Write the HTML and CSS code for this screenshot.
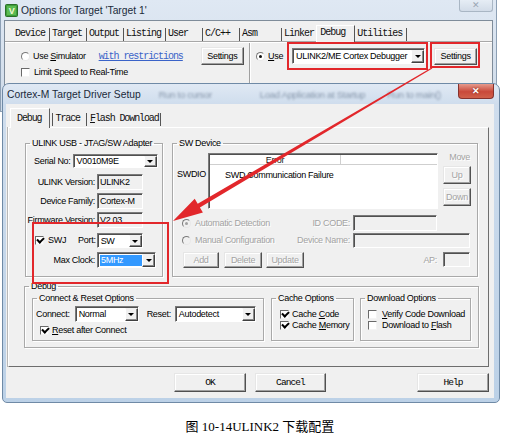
FILE: index.html
```html
<!DOCTYPE html>
<html>
<head>
<meta charset="utf-8">
<link rel="stylesheet" href="styles.css">
</head>
<body>
<div class="stage">

  <div class="win1">
    <div class="tbar1">
      <svg class="appicon" width="13" height="13" viewBox="0 0 13 13">
        <rect x="0.5" y="0.5" width="12" height="12" rx="1" fill="#3f9d3a" stroke="#2a6f28"/>
        <rect x="2" y="2" width="9" height="9" fill="#5bbb52"/>
        <text x="6.5" y="10" text-anchor="middle" font-family="Liberation Sans" font-weight="bold" font-size="9" fill="#f4f8d8">V</text>
      </svg>
      <span class="ttl">Options for Target 'Target 1'</span>
      <span class="xbtn1">✕</span>
    </div>
    <div class="client1">
      <div class="tabs1">
        <span class="tab1">Device</span><span class="tab1">Target</span><span class="tab1">Output</span><span class="tab1">Listing</span><span class="tab1">User  </span><span class="tab1">C/C++ </span><span class="tab1">Asm    </span><span class="tab1 tab1-nb">Linker</span><span class="tab1 tab1-sel">Debug </span><span class="tab1">Utilities</span>
      </div>
      <div class="panel1">
        <div class="sect-left">
          <div class="orow orow1">
            <span class="rb"></span><span class="olbl">Use <u>S</u>imulator</span>
            <span class="link">with restrictions</span>
            <span class="btn set1">Settings</span>
          </div>
          <div class="orow orow2">
            <span class="cb"></span><span class="olbl2">Limit Speed to Real-Time</span>
          </div>
        </div>
        <div class="vsep"></div>
        <div class="sect-right">
          <div class="orow orow1">
            <span class="rb on"></span><span class="olbl"><u>U</u>se</span>
            <span class="combo c-ulink"><span class="val">ULINK2/ME Cortex Debugger</span><span class="arr"></span></span>
            <span class="btn set2">Settings</span>
          </div>
        </div>
      </div>
    </div>
  </div>

  <div class="win2">
    <div class="tbar2">
      <span class="ttl">Cortex-M Target Driver Setup</span>
      <span class="ghost g1">Run to cursor</span>
      <span class="ghost g2">Load Application at Startup</span>
      <span class="ghost g3">Run to main()</span>
      <span class="xbtn2">✕</span>
    </div>
    <div class="client2">
      <div class="tabs2">
        <span class="tab2 tab2-sel">Debug</span><span class="tab2">Trace</span><span class="tab2 tab2-last"><u>F</u>lash Download</span>
      </div>
      <div class="panel2">
        <div class="toprow">
          <fieldset class="grp g-ulink">
            <legend>ULINK USB - JTAG/SW Adapter</legend>
            <div class="urow u-serial">
              <span>Serial No:</span>
              <span class="combo c-serial"><span class="val">V0010M9E</span><span class="arr"></span></span>
            </div>
            <div class="urow u-info u-first"><span class="ulbl">ULINK Version:</span><span class="tb tb-info">ULINK2</span></div>
            <div class="urow u-info"><span class="ulbl">Device Family:</span><span class="tb tb-info">Cortex-M</span></div>
            <div class="urow u-info"><span class="ulbl">Firmware Version:</span><span class="tb tb-info">V2.03</span></div>
            <div class="urow u-swj">
              <span class="cb on"></span><span class="swj">SWJ</span><span class="port">Port:</span>
              <span class="combo c-port"><span class="val">SW</span><span class="arr"></span></span>
            </div>
            <div class="urow u-clk">
              <span class="ulbl">Max Clock:</span>
              <span class="combo c-clk"><span class="val"><span class="sel">5MHz</span></span><span class="arr"></span></span>
            </div>
          </fieldset>
          <fieldset class="grp g-sw">
            <legend>SW Device</legend>
            <div class="sw-top">
              <span class="swdio">SWDIO</span>
              <div class="list">
                <div class="lhead"><span class="lcol">Error</span><span class="lcol2"></span></div>
                <div class="lbody">SWD Communication Failure</div>
              </div>
              <div class="move">
                <span class="dis movelbl">Move</span>
                <span class="btn dis b-mv">Up</span>
                <span class="btn dis b-mv b-down">Down</span>
              </div>
            </div>
            <div class="swrow sw-b">
              <span class="swleft"><span class="rb dim on"></span><span class="dis">Automatic Detection</span></span>
              <span class="swlbl dis">ID CODE:</span><span class="tb b-id"></span>
            </div>
            <div class="swrow sw-c">
              <span class="swleft"><span class="rb dim"></span><span class="dis">Manual Configuration</span></span>
              <span class="swlbl dis">Device Name:</span><span class="tb b-name"></span>
            </div>
            <div class="swrow sw-d">
              <span class="btn dis b-add">Add</span>
              <span class="btn dis b-del">Delete</span>
              <span class="btn dis b-upd">Update</span>
              <span class="swlbl dis">AP:</span><span class="tb b-ap"></span>
            </div>
          </fieldset>
        </div>
        <fieldset class="grp g-debug">
          <legend>Debug</legend>
          <div class="subrow">
            <fieldset class="grp g-conn">
              <legend>Connect &amp; Reset Options</legend>
              <div class="crow">
                <span>Connect:</span>
                <span class="combo c-normal"><span class="val">Normal</span><span class="arr"></span></span>
                <span class="rlbl">Reset:</span>
                <span class="combo c-auto"><span class="val">Autodetect</span><span class="arr"></span></span>
              </div>
              <div class="crow2"><span class="cb on"></span><span class="ctext"><u>R</u>eset after Connect</span></div>
            </fieldset>
            <fieldset class="grp g-cache">
              <legend>Cache Options</legend>
              <div class="chk chk1"><span class="cb on"></span><span class="ctext">Cache <u>C</u>ode</span></div>
              <div class="chk"><span class="cb on"></span><span class="ctext">Cache <u>M</u>emory</span></div>
            </fieldset>
            <fieldset class="grp g-dl">
              <legend>Download Options</legend>
              <div class="chk chk1"><span class="cb"></span><span class="ctext2"><u>V</u>erify Code Download</span></div>
              <div class="chk"><span class="cb"></span><span class="ctext2">Download to <u>F</u>lash</span></div>
            </fieldset>
          </div>
        </fieldset>
      </div>
      <div class="btnrow">
        <span class="btn mono b-ok">OK</span>
        <span class="btn mono b-cancel">Cancel</span>
        <span class="btn mono b-help">Help</span>
      </div>
    </div>
  </div>

  <div class="mark mk1"></div>
  <div class="mark mk2"></div>
  <div class="mark mk3"></div>

  <svg class="arrow" width="509" height="437" viewBox="0 0 509 437">
    <polygon fill="#e2272b" points="432.3,68.5 199.9,207.6 202.9,212.6 173,221 194.7,198.8 197.7,203.8 431.7,67.5"/>
  </svg>

  <p class="caption">图 10-14ULINK2 下载配置</p>
</div>
</body>
</html>
```

FILE: styles.css
```css
* { box-sizing: border-box; margin: 0; padding: 0; }

body {
  width: 509px;
  height: 437px;
  overflow: hidden;
  background: #fff;
  color: #000;
  font-family: "Liberation Sans", Arial, sans-serif;
  font-size: 9px;
  letter-spacing: -0.3px;
  line-height: 11px;
}

.stage { position: relative; width: 509px; height: 437px; overflow: hidden; }

u { text-decoration: underline; text-underline-offset: 1px; }

/* ---------- outer window ---------- */
.win1 {
  position: absolute;
  left: 0; top: 0;
  width: 497px; height: 112px;
  background: linear-gradient(#dfe8f3, #cfdbe9);
  border: 1px solid #8c9fb4;
  border-top: none;
  padding: 0 3px;
  display: flex;
  flex-direction: column;
}
.tbar1 { height: 20px; display: flex; align-items: center; padding-left: 1px; }
.appicon { flex: none; margin-right: 3px; }
.ttl { font-size: 10.3px; letter-spacing: 0; color: #1b2a3a; }
.xbtn1 {
  align-self: flex-start;
  margin-left: auto; margin-right: 0;
  width: 34px; height: 12px;
  border: 1px solid #a9b6c4; border-top: none;
  border-radius: 0 0 3px 3px;
  background: linear-gradient(#e6edf5, #d2dce8);
  color: #9aa6b3; font-size: 9px; line-height: 11px; text-align: center;
}
.client1 { flex: 1; background: #f0f0f0; border: 1px solid #7f8c9a; border-bottom: none; display: flex; flex-direction: column; }
.tabs1 { height: 20px; display: flex; align-items: flex-end; padding-left: 8px; }
.tab1 {
  height: 13px; line-height: 12px;
  padding: 0 4px 0 2px;
  border-right: 1px solid #555;
  font-family: "Liberation Mono", monospace; font-size: 10px; letter-spacing: -1px;
  white-space: pre; color: #111;
}
.tab1-nb { border-right: none; padding-right: 2px; }
.tab1-sel {
  height: 17px; line-height: 14px;
  padding: 0 4px 0 3px;
  border-left: 1px solid #fff; border-top: 1px solid #fff;
  position: relative; top: 1px;
  background: #f0f0f0;
}
.panel1 { flex: 1; display: flex; border-top: 1px solid #a8a8a8; box-shadow: inset 0 1px 0 #fff; }
.sect-left { width: 244px; padding: 5px 0 0 16px; }
.vsep { width: 2px; margin-top: 1px; border-left: 1px solid #a0a0a0; border-right: 1px solid #fff; }
.sect-right { flex: 1; padding: 5px 0 0 5px; }
.orow { display: flex; align-items: center; }
.orow1 { height: 18px; }
.orow2 { height: 11px; margin-top: 2px; }
.olbl { margin-left: 3px; }
.olbl2 { margin-left: 4px; }
.link {
  margin-left: 13px;
  font-family: "Liberation Mono", monospace; font-size: 10px; letter-spacing: -1.05px;
  color: #3a63c8; text-decoration: underline;
}
.set1 { margin-left: 18px; width: 43px; height: 18px; }
.c-ulink { margin-left: 9px; width: 133px; height: 16px; }
.set2 { margin-left: 9px; width: 43px; height: 17px; }

/* ---------- widgets ---------- */
.btn {
  display: flex; align-items: center; justify-content: center;
  background: #f0f0f0;
  border: 1px solid; border-color: #e6e6e6 #505050 #505050 #e6e6e6;
  box-shadow: inset -1px -1px 0 #a0a0a0, inset 1px 1px 0 #fff;
  white-space: nowrap;
}
.mono { font-family: "Liberation Mono", monospace; font-size: 9.5px; letter-spacing: -0.9px; }
.dis { color: #a3a3a3; text-shadow: 1px 1px 0 #fff; }

.rb {
  flex: none; position: relative;
  width: 9px; height: 9px; border-radius: 50%;
  border: 1px solid; border-color: #7a7a7a #e8e8e8 #e8e8e8 #7a7a7a;
  background: #fff;
}
.rb.on::after {
  content: ""; position: absolute; left: 2px; top: 2px;
  width: 3px; height: 3px; border-radius: 50%; background: #111;
}
.rb.dim { background: #f0f0f0; }
.rb.dim.on::after { background: #a0a0a0; }

.cb {
  flex: none; position: relative;
  width: 9px; height: 9px;
  border: 1px solid; border-color: #6a6a6a #f4f4f4 #f4f4f4 #6a6a6a;
  background: #fff;
}
.cb.on::after {
  content: ""; position: absolute; left: 1px; top: 0px;
  width: 5px; height: 3px;
  border-left: 2px solid #000; border-bottom: 2px solid #000;
  transform: rotate(-45deg);
}

.tb {
  display: flex; align-items: center; padding-left: 2px;
  border: 1px solid; border-color: #7a7a7a #fff #fff #7a7a7a;
  box-shadow: inset 1px 1px 0 #505050;
  background: #f0f0f0;
  white-space: nowrap;
}

.combo {
  display: flex; flex: none;
  border: 1px solid; border-color: #7a7a7a #fff #fff #7a7a7a;
  box-shadow: inset 1px 1px 0 #505050;
  background: #fff;
  padding: 1px 0 0 1px;
}
.combo .val { flex: 1; display: flex; align-items: center; padding-left: 2px; white-space: nowrap; overflow: hidden; }
.combo .arr {
  width: 13px; flex: none;
  display: flex; align-items: center; justify-content: center;
  background: #f0f0f0;
  border: 1px solid; border-color: #f0f0f0 #404040 #404040 #fff;
  box-shadow: inset -1px -1px 0 #888;
}
.combo .arr::after {
  content: ""; border-left: 3px solid transparent; border-right: 3px solid transparent; border-top: 3px solid #000;
}

/* ---------- inner window ---------- */
.win2 {
  position: absolute;
  left: 2px; top: 83px;
  width: 498px; height: 320px;
  border: 1px solid #6f8aa6;
  border-radius: 7px 7px 5px 5px;
  background: linear-gradient(#e0e9f4 0, #cfdded 20px, #bcd1e7 100%);
  display: flex; flex-direction: column;
}
.tbar2 { height: 20px; display: flex; align-items: center; padding-left: 4px; }
.ghost { color: rgba(70, 90, 115, 0.55); filter: blur(1.3px); font-size: 9.5px; white-space: nowrap; }
.g1 { margin-left: 18px; }
.g2 { margin-left: 48px; }
.g3 { margin-left: 22px; }
.xbtn2 {
  align-self: flex-start;
  margin-left: auto; margin-right: 5px;
  width: 36px; height: 15px;
  border: 1px solid #86322d; border-top: none;
  border-radius: 0 0 4px 4px;
  background: linear-gradient(#e69a8c, #c9493a 55%, #d0604a);
  color: #fff; font-size: 9px; font-weight: bold; line-height: 14px; text-align: center;
  text-shadow: 0 0 2px #6a1a10;
}
.client2 {
  height: 294px; margin: 0 5px 0 3px;
  background: #f0f0f0;
  display: flex; flex-direction: column;
}
.tabs2 { height: 23px; display: flex; align-items: flex-end; padding-left: 4px; }
.tab2 {
  height: 13px; line-height: 12px; margin-bottom: 1px;
  padding: 0 6px 0 3px;
  border-left: 1px solid #555;
  font-family: "Liberation Mono", monospace; font-size: 10px; letter-spacing: -1.1px;
  white-space: pre; color: #111;
}
.tab2 + .tab2 { margin-left: 0; }
.tab2-sel {
  height: 20px; line-height: 19px; margin-bottom: -1px;
  padding: 0 7px 0 6px;
  border-left: 1px solid #fff; border-top: 1px solid #fff; border-right: 1px solid #606060;
  background: #f0f0f0; position: relative;
  margin-right: 2px;
}
.tab2-last { border-right: 1px solid #555; padding-right: 1px; }
.panel2 {
  width: 481px; height: 240px; margin-left: 2px;
  border: 1px solid; border-color: #fff #6d6d6d #6d6d6d #fff;
  box-shadow: -1px 0 0 #b8b8b8;
}
.toprow { display: flex; margin-top: 9px; padding-left: 16px; }

.grp {
  min-width: 0;
  border: 1px solid #a9a9a9;
  box-shadow: 1px 1px 0 #fff, inset 1px 1px 0 #fff;
}
.grp > legend { margin-left: 4px; padding: 0 2px; line-height: 12px; }

.g-ulink { width: 138px; height: 140px; }
.g-sw { width: 306px; height: 140px; margin-left: 9px; }

.urow { display: flex; align-items: center; }
.u-serial { margin-top: 5px; height: 14px; padding-left: 8px; }
.c-serial { margin-left: 2px; width: 85px; height: 14px; }
.ulbl { width: 69px; text-align: right; margin-right: 2px; white-space: nowrap; flex: none; }
.u-info { height: 16px; margin-top: 3px; }
.u-first { margin-top: 6px; }
.tb-info { width: 46px; height: 16px; }
.u-swj { margin-top: 5px; height: 15px; padding-left: 9px; }
.swj { margin-left: 4px; }
.port { margin-left: 12px; margin-right: 1px; }
.c-port { width: 46px; height: 15px; }
.u-clk { margin-top: 4px; height: 16px; }
.c-clk { width: 59px; height: 16px; }
.c-clk .val { padding: 1px 0 1px 1px; }
.sel { flex: 1; align-self: stretch; background: #3399ff; color: #fff; padding-left: 1px; display: flex; align-items: center; }

.sw-top { display: flex; align-items: flex-start; padding-left: 4px; height: 60px; }
.swdio { width: 31px; margin-top: 20px; }
.list {
  width: 230px; height: 56px; margin-top: 4px;
  border: 1px solid; border-color: #7a7a7a #fff #fff #7a7a7a;
  box-shadow: inset 1px 1px 0 #505050;
  background: #fff;
  padding: 1px 0 0 1px;
}
.lhead { display: flex; height: 10px; border-bottom: 1px solid #cfcfcf; line-height: 10px; }
.lcol { width: 131px; text-align: center; border-right: 1px solid #cfcfcf; color: #222; }
.lcol2 { flex: 1; }
.lbody { margin: 5px 0 0 15px; }
.move { width: 28px; margin-left: 5px; display: flex; flex-direction: column; align-items: stretch; }
.movelbl { margin-top: 3px; text-align: right; padding-right: 1px; }
.b-mv { height: 18px; margin-top: 3px; }
.b-down { margin-top: 4px; }

.swrow { display: flex; align-items: center; width: 288px; margin-left: 9px; }
.swleft { display: flex; align-items: center; gap: 4px; flex: none; }
.swlbl { flex: 1; text-align: right; padding-right: 3px; white-space: nowrap; }
.sw-b { margin-top: 6px; height: 16px; }
.b-id { width: 84px; height: 16px; margin-right: 33px; }
.sw-c { margin-top: 2px; height: 15px; }
.b-name { width: 117px; height: 15px; }
.sw-d { margin-top: 4px; height: 16px; align-items: flex-start; }
.sw-d .swlbl { align-self: center; padding-right: 6px; }
.b-add { width: 36px; height: 16px; margin-left: 1px; }
.b-del { width: 38px; height: 16px; margin-left: 5px; }
.b-upd { width: 38px; height: 16px; margin-left: 4px; }
.b-ap { width: 27px; height: 15px; }

.g-debug { width: 455px; height: 68px; margin: 3px 0 0 15px; }
.g-debug > legend { margin-left: 4px; }
.subrow { display: flex; padding-left: 7px; }
.g-conn { width: 232px; height: 49px; }
.g-cache { width: 83px; height: 49px; margin-left: 7px; }
.g-dl { width: 111px; height: 49px; margin-left: 6px; }
.crow { display: flex; align-items: center; height: 16px; margin-top: 2px; padding-left: 3px; }
.c-normal { margin-left: 5px; width: 64px; height: 16px; }
.rlbl { margin-left: 8px; }
.c-auto { margin-left: 4px; width: 81px; height: 16px; }
.crow2 { display: flex; align-items: center; height: 10px; margin-top: 3px; padding-left: 7px; }
.ctext { margin-left: 3px; }
.chk { display: flex; align-items: center; height: 10px; margin-top: 1px; padding-left: 8px; }
.g-dl .chk { padding-left: 7px; }
.chk1 { margin-top: 5px; }
.ctext2 { margin-left: 5px; white-space: nowrap; }

.btnrow { display: flex; margin-top: 6px; }
.b-ok { margin-left: 168px; width: 72px; height: 19px; }
.b-cancel { margin-left: 9px; width: 71px; height: 19px; }
.b-help { margin-left: 91px; width: 72px; height: 19px; }

/* ---------- annotations ---------- */
.mark { position: absolute; border: 2px solid #e2272b; }
.mk1 { left: 287px; top: 42px; width: 141px; height: 28px; }
.mk2 { left: 430px; top: 42px; width: 50px; height: 26px; }
.mk3 { left: 32px; top: 222px; width: 137px; height: 62px; }
.arrow { position: absolute; left: 0; top: 0; pointer-events: none; }

.caption {
  padding-top: 419px; padding-left: 11px;
  text-align: center;
  font-family: "Liberation Serif", "Noto Sans CJK SC", serif;
  font-size: 13px; line-height: 16px; letter-spacing: 0;
}
```
